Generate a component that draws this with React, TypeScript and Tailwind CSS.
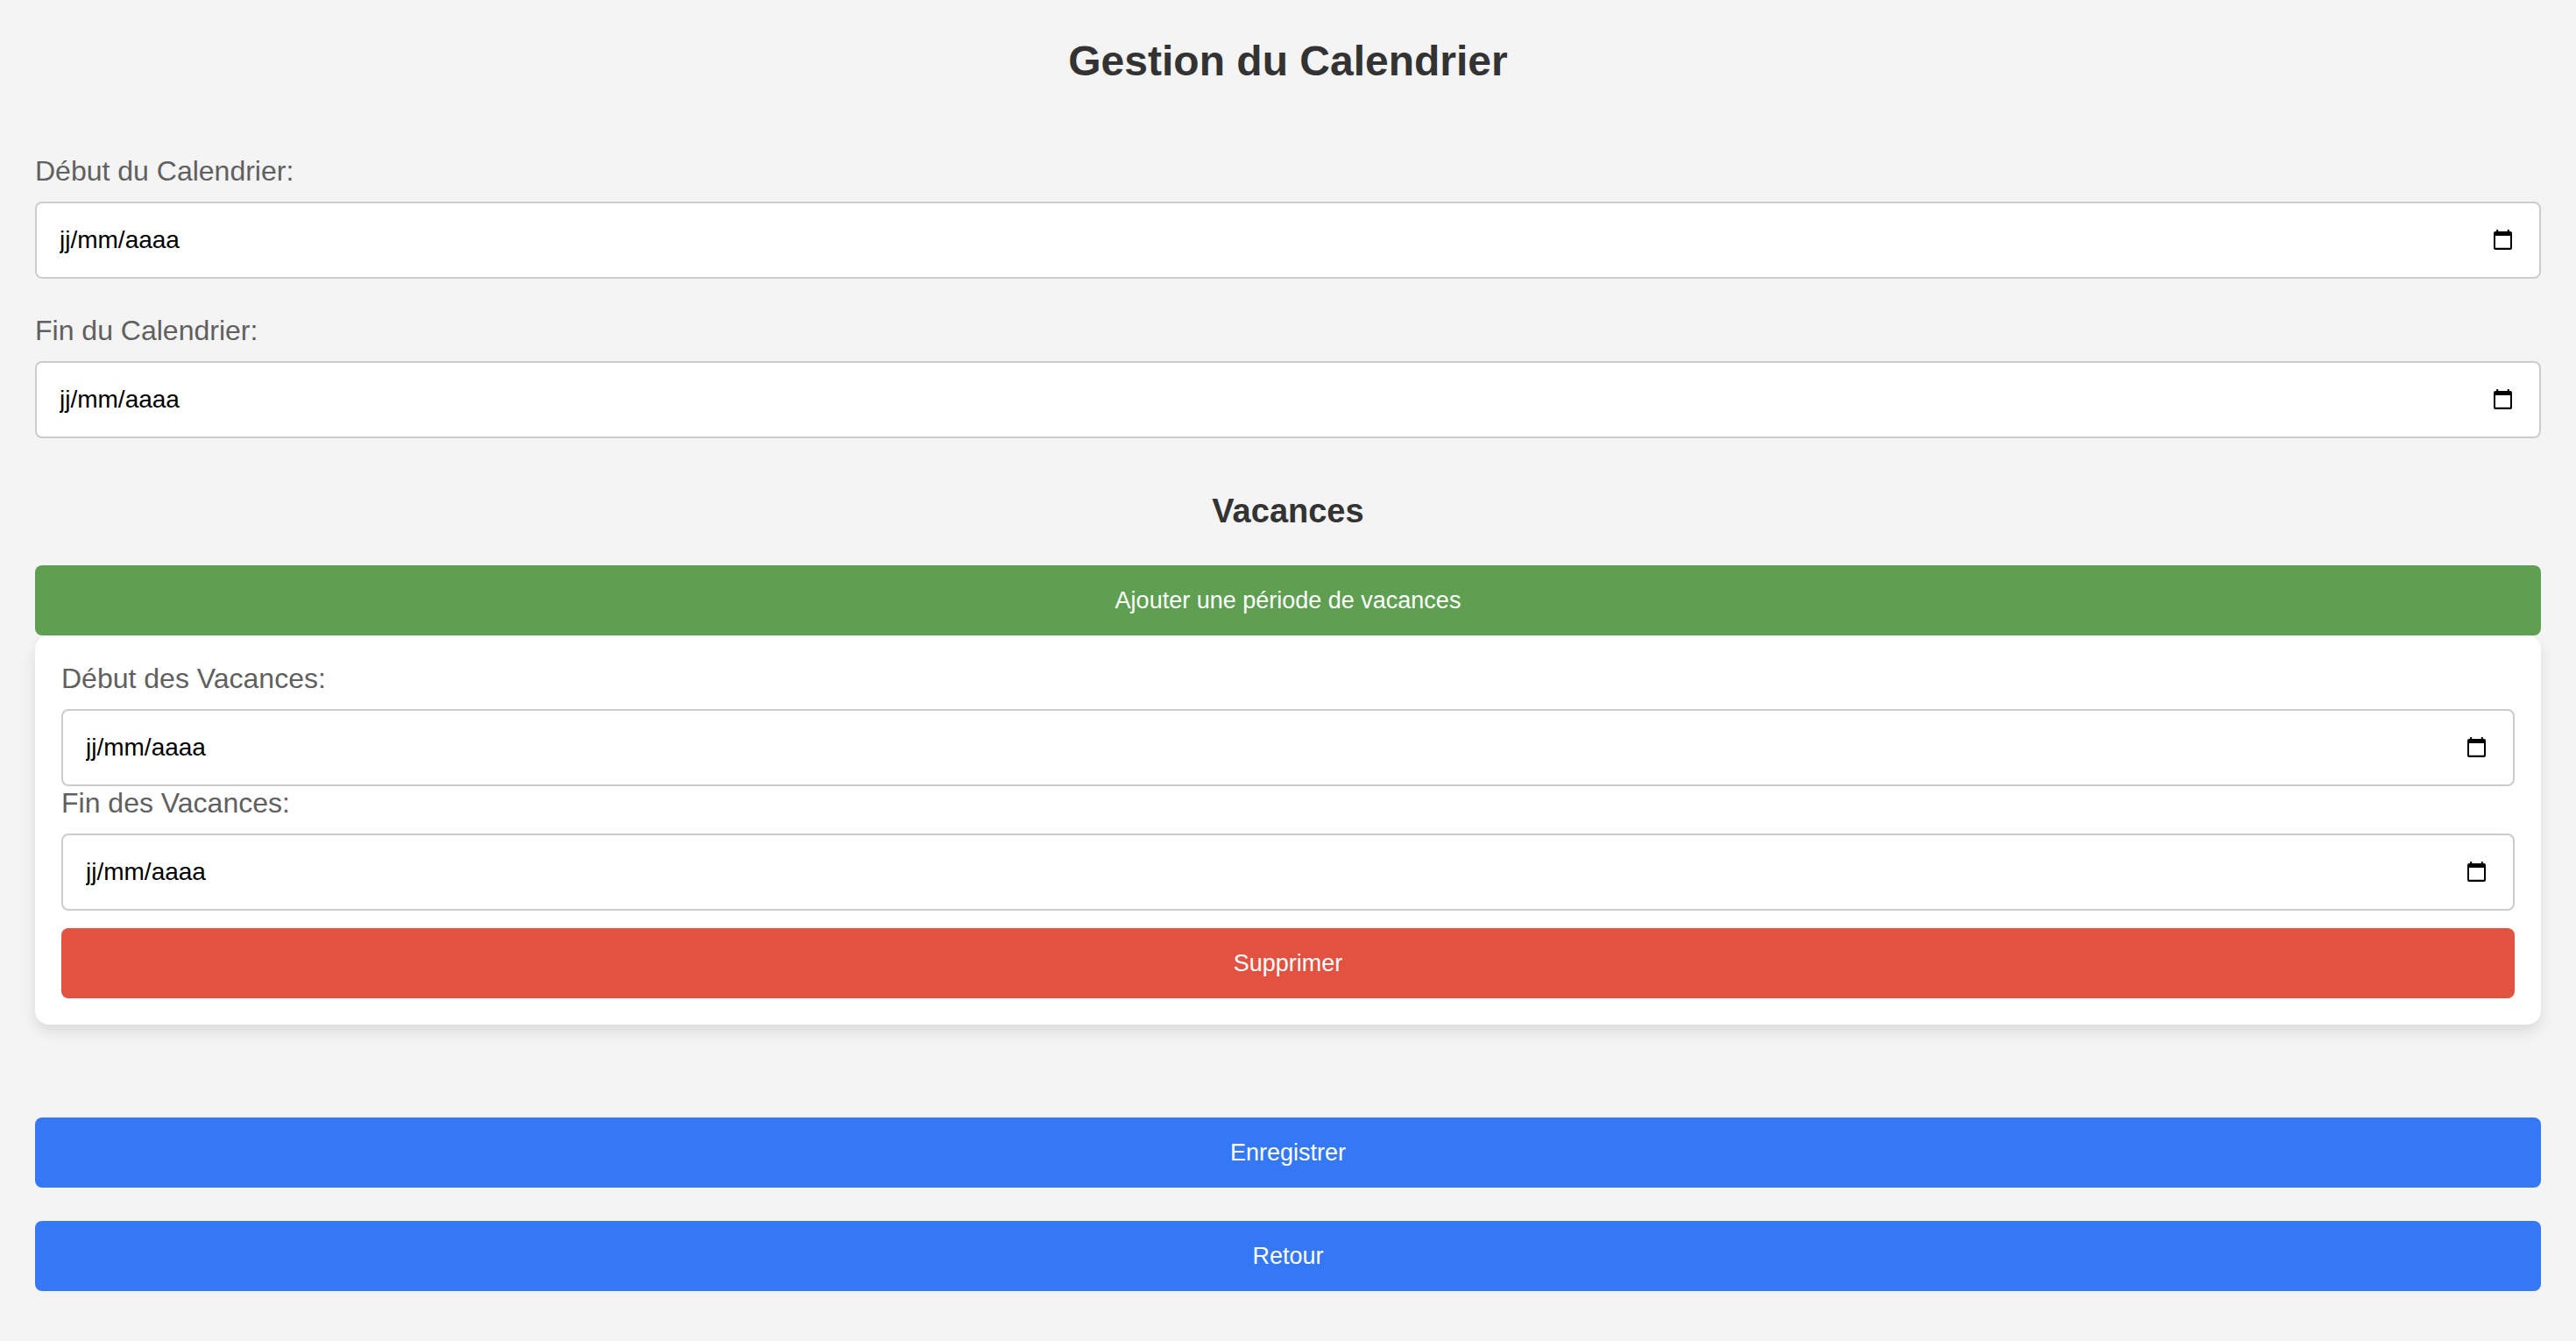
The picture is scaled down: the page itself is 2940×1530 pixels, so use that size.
import React from "react";

function CalendarIcon() {
  return (
    <svg viewBox="0 0 21 24" className="pointer-events-none absolute right-[33px] h-6 w-[21px]" aria-hidden="true">
      <path
        fill="#000"
        fillRule="evenodd"
        d="M3.200 0h2v2h10.600V0h2v2H19a2 2 0 0 1 2 2v17a2 2 0 0 1-2 2H2a2 2 0 0 1-2-2V4a2 2 0 0 1 2-2h1.200zM2 7v13.800h17V7z"
      />
    </svg>
  );
}

function DateField({ id, label }: { id: string; label: string }) {
  return (
    <div className="flex flex-col gap-4">
      <label htmlFor={id} className="text-[32px] leading-[38px] text-[#606060]">{label}</label>
      <div className="relative flex items-center">
        <input
          id={id}
          type="text"
          inputMode="numeric"
          placeholder="jj/mm/aaaa"
          className="h-[88px] w-full rounded-lg border-2 border-[#ccc] bg-white px-[26px] text-[28px] text-black placeholder:text-black"
        />
        <CalendarIcon />
      </div>
    </div>
  );
}

function Button({ children, color }: { children: React.ReactNode; color: string }) {
  return (
    <button type="button" className={`h-20 w-full rounded-lg text-[27px] leading-8 text-white ${color}`}>
      {children}
    </button>
  );
}

export default function App() {
  return (
    <main className="min-h-screen bg-[#f4f4f4] px-10 pt-10 pb-14 font-['Liberation_Sans',Arial,sans-serif]">
      <h1 className="text-center text-[48px] leading-[60px] font-bold text-[#333]">Gestion du Calendrier</h1>
      <form className="mt-[76px]">
        <div className="flex flex-col gap-10">
          <DateField id="calendar-start" label="Début du Calendrier:" />
          <DateField id="calendar-end" label="Fin du Calendrier:" />
        </div>
        <h2 className="mt-[61px] mb-10 text-center text-[38px] leading-11 font-bold text-[#333]">Vacances</h2>
        <Button color="bg-[#5f9f52]">Ajouter une période de vacances</Button>
        <section className="rounded-2xl bg-white p-[30px] shadow-[0_8px_16px_rgba(0,0,0,0.1)]">
          <DateField id="holiday-start" label="Début des Vacances:" />
          <DateField id="holiday-end" label="Fin des Vacances:" />
          <div className="mt-5">
            <Button color="bg-[#e15241]">Supprimer</Button>
          </div>
        </section>
        <div className="mt-[106px] flex flex-col gap-[38px]">
          <Button color="bg-[#3478f6]">Enregistrer</Button>
          <Button color="bg-[#3478f6]">Retour</Button>
        </div>
      </form>
    </main>
  );
}
